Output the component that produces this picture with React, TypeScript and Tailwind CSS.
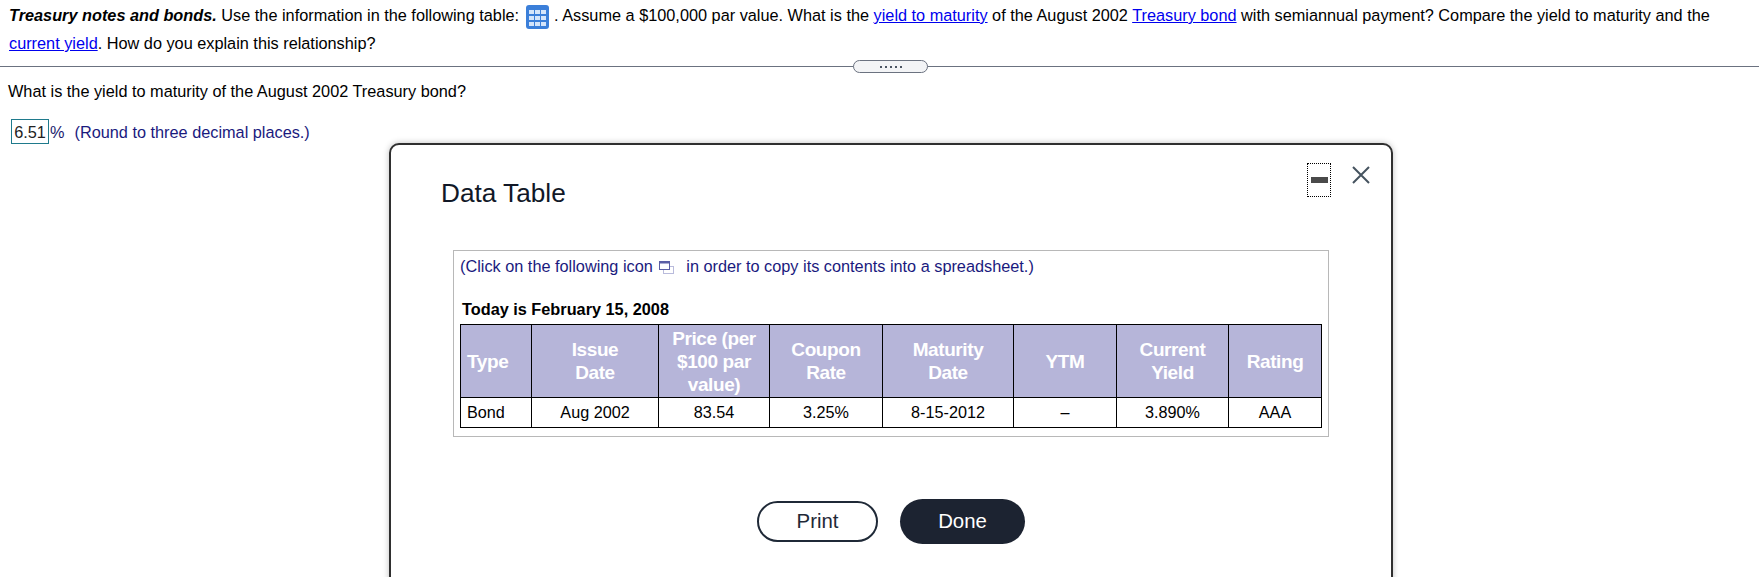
const font = "font-['Liberation_Sans',Arial,sans-serif]";

function GridIcon() {
  return (
    <svg width="23" height="24" viewBox="0 0 23 24" className="inline-block align-middle ml-[7px] mr-[5px] -my-[4px]">
      <rect x="0" y="0" width="23" height="24" rx="3" fill="#3b7fd9" />
      {[5, 11, 17].map((y) =>
        [3, 9, 15].map((x) => <rect key={`${x}-${y}`} x={x} y={y} width="5" height="4" fill="#d5e5fa" />)
      )}
    </svg>
  );
}

function CopyIcon() {
  return (
    <svg width="16" height="14" viewBox="0 0 16 14" className="inline-block align-middle mx-[2px]">
      <rect x="4.5" y="5.5" width="10" height="7" fill="#fff" stroke="#b9bbdc" />
      <rect x="0.5" y="0.5" width="10" height="8" fill="#fff" stroke="#5b5fa5" />
      <rect x="0.5" y="0.5" width="10" height="2" fill="#5b5fa5" />
    </svg>
  );
}

const Link = ({ children }: { children: React.ReactNode }) => (
  <a className="text-[#0000ee] underline">{children}</a>
);

const cols = [71, 127, 111, 113, 131, 103, 112, 93];
const heads = [
  <>Type</>,
  <>Issue<br />Date</>,
  <>Price (per<br />$100 par<br />value)</>,
  <>Coupon<br />Rate</>,
  <>Maturity<br />Date</>,
  <>YTM</>,
  <>Current<br />Yield</>,
  <>Rating</>,
];
const vals = ["Bond", "Aug 2002", "83.54", "3.25%", "8-15-2012", "–", "3.890%", "AAA"];

export default function App() {
  return (
    <div className={`${font} relative h-[577px] overflow-hidden bg-white text-[16.3px] text-black`}>
      <div className="pl-[9px] pr-4 pt-[1px] leading-[28px] whitespace-nowrap">
        <p>
          <b><i>Treasury notes and bonds.</i></b> Use the information in the following table:
          <GridIcon />. Assume a $100,000 par value. What is the <Link>yield to maturity</Link> of the August 2002{" "}
          <Link>Treasury bond</Link> with semiannual payment? Compare the yield to maturity and the
          <br />
          <Link>current yield</Link>. How do you explain this relationship?
        </p>
      </div>

      <div className="relative mt-[9px] h-[1px] bg-[#6b7280]">
        <div className="absolute left-[853px] top-[-6px] flex h-[13px] w-[75px] items-center justify-center gap-[3px] rounded-full border border-[#6b7280] bg-[#f3f4f6]">
          {[0, 1, 2, 3, 4].map((i) => (
            <span key={i} className="h-[2px] w-[2px] bg-[#4b5563]" />
          ))}
        </div>
      </div>

      <p className="mt-[14px] pl-[8px] leading-[20px]">What is the yield to maturity of the August 2002 Treasury bond?</p>

      <div className="mt-[18px] flex items-center pl-[11px] leading-[20px]">
        <span className="flex h-[25px] w-[38px] items-center justify-center border border-[#1f7a8c] text-[#222]">6.51</span>
        <span className="ml-[1px] text-[#1a1a6e]">%</span>
        <span className="ml-[10px] text-[#1a1a7e]">(Round to three decimal places.)</span>
      </div>

      <div className="absolute left-[389px] top-[143px] h-[560px] w-[1004px] rounded-[10px] border-2 border-[#2f2f2f] bg-white shadow-[0_0_6px_rgba(0,0,0,0.25)]">
        <div className="absolute left-[916px] top-[18px] flex h-[34px] w-[24px] items-center justify-center border border-dotted border-black">
          <span className="h-[6px] w-[17px] bg-[#4a4a4a]" />
        </div>
        <svg className="absolute left-[960px] top-[20px]" width="20" height="20" viewBox="0 0 20 20" fill="none" stroke="#45535f" strokeWidth="2">
          <path d="M2 2 L18 18 M18 2 L2 18" />
        </svg>

        <h2 className="ml-[50px] mt-[32px] text-[26.2px] leading-[32px] text-[#111827]">Data Table</h2>

        <div className="ml-[62px] mt-[41px] h-[187px] w-[876px] border border-[#b8b8b8] pl-[6px] pr-[6px]">
          <p className="mt-[5px] leading-[20px] text-[#1a1a7e]">
            (Click on the following icon <CopyIcon />
            <span className="ml-[9px]">in order to copy its contents into a spreadsheet.)</span>
          </p>
          <p className="ml-[2px] mt-[23px] font-bold leading-[20px]">Today is February 15, 2008</p>
          <table className="mt-[5px] table-fixed border-collapse border-[1.5px] border-black" style={{ width: 861 }}>
            <colgroup>
              {cols.map((w, i) => (
                <col key={i} style={{ width: w }} />
              ))}
            </colgroup>
            <tbody>
              <tr className="h-[73px] bg-[#b6b5d9]">
                {heads.map((h, i) => (
                  <th
                    key={i}
                    className={`border border-black text-[19px] font-bold leading-[23px] tracking-[-0.4px] text-white ${i === 0 ? "pl-[6px] text-left" : "text-center"}`}
                  >
                    {h}
                  </th>
                ))}
              </tr>
              <tr className="h-[30px]">
                {vals.map((v, i) => (
                  <td key={i} className={`border border-black text-[16.2px] ${i === 0 ? "pl-[6px] text-left" : "text-center"}`}>
                    {v}
                  </td>
                ))}
              </tr>
            </tbody>
          </table>
        </div>

        <div className="mt-[62px] flex items-center pl-[366px]">
          <button className="h-[41px] w-[121px] rounded-full border-[2.5px] border-[#1f2937] bg-white text-[20.4px] text-[#1f2937]">Print</button>
          <button className="ml-[22px] h-[45px] w-[125px] rounded-full bg-[#1c2331] text-[20.4px] text-white">Done</button>
        </div>
      </div>
    </div>
  );
}
